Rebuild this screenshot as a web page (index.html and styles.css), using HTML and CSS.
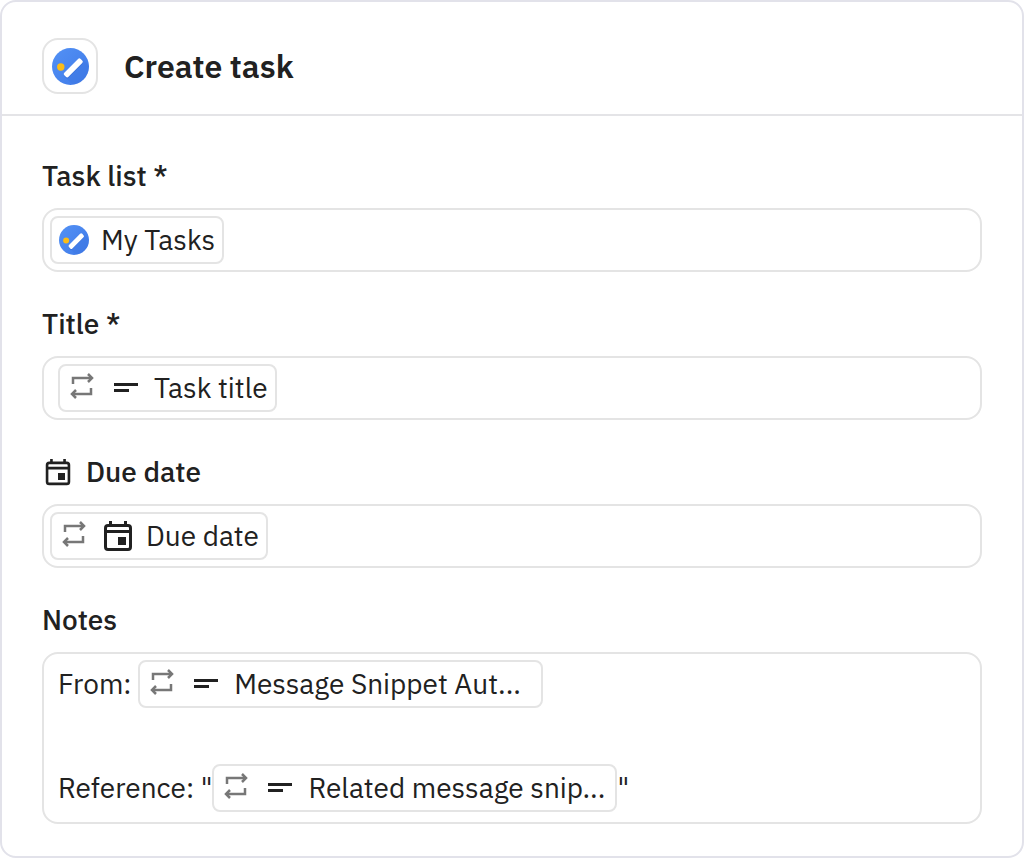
FILE: index.html
```html
<!DOCTYPE html>
<html lang="en">
<head>
    <meta charset="UTF-8">
    <meta name="viewport" content="width=device-width, initial-scale=1.0">
    <title>Create task</title>
    <link rel="stylesheet" href="styles.css">
</head>
<body>
    <!-- Shared icons -->
    <svg class="sprite" aria-hidden="true">
        <defs>
            <linearGradient id="tasks-blue" x1="0" y1="0" x2="1" y2="1">
                <stop offset="0" stop-color="#5391f5"/>
                <stop offset="1" stop-color="#3f7ae8"/>
            </linearGradient>
            <clipPath id="tasks-clip"><circle cx="20" cy="20" r="20"/></clipPath>
        </defs>
        <symbol id="icon-tasks" viewBox="0 0 40 40">
            <circle cx="20" cy="20" r="20" fill="url(#tasks-blue)"/>
            <path d="M14 31L33 12L50 29L31 48Z" fill="#2f62ce" opacity=".15" clip-path="url(#tasks-clip)"/>
            <rect x="10.500" y="19.300" width="25" height="6.400" rx="2" fill="#2f5fc4" opacity=".35" transform="rotate(-45 23 22.500)"/>
            <rect x="10.500" y="18.300" width="25" height="6.400" rx="2" fill="#ffffff" transform="rotate(-45 23 21.500)"/>
            <circle cx="9.500" cy="20.500" r="4" fill="#fbbc16"/>
        </symbol>
        <symbol id="icon-repeat" viewBox="0 0 24 28">
            <g fill="none" stroke="#777777" stroke-width="2.500">
                <path d="M3 12V6H21"/>
                <path d="M18 2L22 6L18 10"/>
                <path d="M21 16V22H3"/>
                <path d="M6 18L2 22L6 26"/>
            </g>
        </symbol>
        <symbol id="icon-text" viewBox="0 0 32 32">
            <path d="M4 11H28V14H4ZM4 17H19V20H4Z" fill="#212121"/>
        </symbol>
        <symbol id="icon-date" viewBox="0 0 32 32">
            <path d="M7 1H10V4H22V1H25V4H26Q30 4 30 8V27Q30 31 26 31H6Q2 31 2 27V8Q2 4 6 4H7ZM5 8V10H27V8Q27 7 26 7H6Q5 7 5 8ZM5 13V27Q5 28 6 28H26Q27 28 27 27V13ZM16 17H24V25H16Z" fill="#212121" fill-rule="evenodd"/>
        </symbol>
    </svg>

    <form class="card">
        <header class="card-header">
            <span class="app-badge"><svg class="app-icon" aria-hidden="true"><use href="#icon-tasks"/></svg></span>
            <h1>Create task</h1>
        </header>

        <div class="card-body">
            <div class="field">
                <label for="task-list">Task list *</label>
                <div class="field-box">
                    <button type="button" class="chip">
                        <svg class="chip-logo" aria-hidden="true"><use href="#icon-tasks"/></svg>
                        <span class="chip-text">My Tasks</span>
                    </button>
                    <input type="text" id="task-list" class="field-input">
                </div>
            </div>

            <div class="field">
                <label for="title">Title *</label>
                <div class="field-box field-box-text">
                    <button type="button" class="chip">
                        <svg class="chip-repeat" aria-hidden="true"><use href="#icon-repeat"/></svg>
                        <svg class="chip-type" aria-hidden="true"><use href="#icon-text"/></svg>
                        <span class="chip-text">Task title</span>
                    </button>
                    <input type="text" id="title" class="field-input">
                </div>
            </div>

            <div class="field">
                <label for="due-date"><svg class="label-icon" aria-hidden="true"><use href="#icon-date"/></svg>Due date</label>
                <div class="field-box">
                    <button type="button" class="chip">
                        <svg class="chip-repeat" aria-hidden="true"><use href="#icon-repeat"/></svg>
                        <svg class="chip-type" aria-hidden="true"><use href="#icon-date"/></svg>
                        <span class="chip-text">Due date</span>
                    </button>
                    <input type="text" id="due-date" class="field-input">
                </div>
            </div>

            <div class="field">
                <label for="notes">Notes</label>
                <div class="field-box field-box-text notes">
                    <div class="note-line">
                        <span class="note-text">From: </span>
                        <button type="button" class="chip">
                            <svg class="chip-repeat" aria-hidden="true"><use href="#icon-repeat"/></svg>
                            <svg class="chip-type" aria-hidden="true"><use href="#icon-text"/></svg>
                            <span class="chip-text chip-text-long">Message Snippet Aut...</span>
                        </button>
                    </div>
                    <div class="note-line"></div>
                    <div class="note-line">
                        <span class="note-text">Reference: "</span>
                        <button type="button" class="chip">
                            <svg class="chip-repeat" aria-hidden="true"><use href="#icon-repeat"/></svg>
                            <svg class="chip-type" aria-hidden="true"><use href="#icon-text"/></svg>
                            <span class="chip-text chip-text-long">Related message snip...</span>
                        </button>
                        <span class="note-text">"</span>
                        <textarea id="notes" class="field-input" rows="1"></textarea>
                    </div>
                </div>
            </div>
        </div>
    </form>
</body>
</html>
```
FILE: styles.css
```css
* {
    box-sizing: border-box;
}
body {
    margin: 0;
    background: white;
    color: #212121;
    font-family: "IBM Plex Sans", Roboto, sans-serif;
    font-size: 28px;
    line-height: 40px;
}
.sprite {
    position: absolute;
    width: 0;
    height: 0;
}
.card {
    border: 2px solid #e2e2ea;
    border-radius: 16px;
}
.card-header {
    display: flex;
    align-items: center;
    gap: 26px;
    padding: 36px 40px 20px;
    border-bottom: 2px solid #e4e4e7;
}
.card-header h1 {
    margin: 0;
    font-size: 32px;
    font-weight: 600;
}
.app-badge {
    display: flex;
    align-items: center;
    justify-content: center;
    width: 56px;
    height: 56px;
    border: 2px solid #e4e4e4;
    border-radius: 16px;
}
.app-icon {
    width: 37px;
    height: 37px;
}
.card-body {
    display: flex;
    flex-direction: column;
    gap: 32px;
    padding: 40px 40px 32px;
}
.field {
    display: flex;
    flex-direction: column;
    gap: 12px;
}
.field label {
    display: flex;
    align-items: center;
    gap: 14px;
    font-weight: 500;
}
.label-icon {
    width: 28px;
    height: 28px;
    margin-left: 2px;
}
.field-box {
    display: flex;
    padding: 6px;
    border: 2px solid #e4e4e4;
    border-radius: 16px;
}
.field-box-text {
    padding-left: 14px;
}
.field-input {
    flex: 1;
    min-width: 0;
    height: 48px;
    padding: 4px 8px;
    border: none;
    outline: none;
    resize: none;
    background: transparent;
    color: inherit;
    font: inherit;
}
.chip {
    display: flex;
    align-items: center;
    flex-shrink: 0;
    height: 48px;
    padding: 0 7px;
    border: 2px solid #e4e4e4;
    border-radius: 8px;
    background: white;
    color: inherit;
    font: inherit;
    cursor: pointer;
}
.chip-logo {
    width: 30px;
    height: 30px;
    margin-right: 12px;
}
.chip-repeat {
    width: 24px;
    height: 28px;
    margin: 0 16px 4px 3px;
}
.chip-type {
    width: 32px;
    height: 32px;
    margin-right: 12px;
}
.chip-text-long {
    width: 300px;
    text-align: left;
}
.notes {
    flex-direction: column;
}
.note-line {
    display: flex;
    height: 52px;
}
.note-text {
    line-height: 48px;
    white-space: pre;
}
```
